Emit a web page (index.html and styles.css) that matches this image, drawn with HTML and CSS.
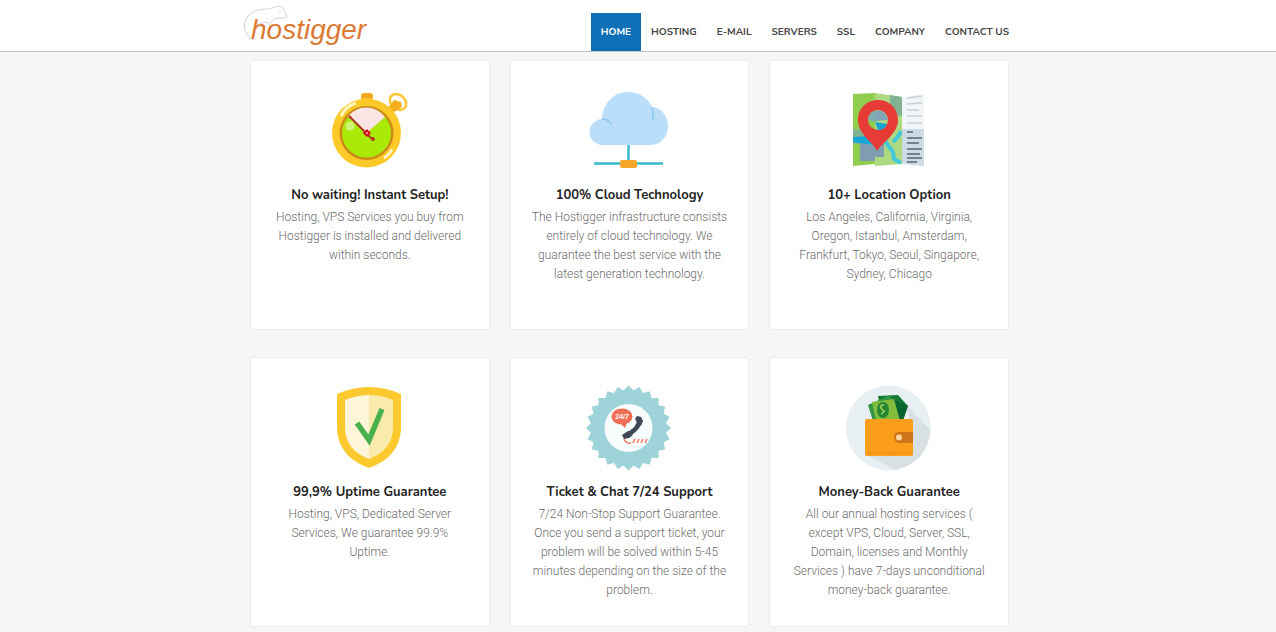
FILE: index.html
```html
<!DOCTYPE html>
<html lang="en">
<head>
<meta charset="utf-8">
<meta name="viewport" content="width=device-width, initial-scale=1">
<title>Hostigger</title>
<link rel="stylesheet" href="styles.css">
</head>
<body>
<header class="site-header">
  <div class="header-inner">
    <a class="logo" href="#">
      <svg class="logo-mark" viewBox="0 0 52 42" aria-hidden="true"><path d="M10 37C3 32 0 26 2 19C4 11 13 6 24 6C29 6 32 2 39 4C42 6 41 10 44 13L43 15L36 15C31 15 29 18 26 22L24 19C19 20 16 20 13 23M36 8l2 1"/></svg>
      <span class="logo-text">hostigger</span>
    </a>
    <nav class="nav">
      <a class="nav-link active" href="#">HOME</a>
      <a class="nav-link" href="#">HOSTING</a>
      <a class="nav-link" href="#">E-MAIL</a>
      <a class="nav-link" href="#">SERVERS</a>
      <a class="nav-link" href="#">SSL</a>
      <a class="nav-link" href="#">COMPANY</a>
      <a class="nav-link" href="#">CONTACT US</a>
    </nav>
  </div>
</header>
<main class="features">
  <article class="card">
    <svg class="icon" viewBox="0 0 100 100" aria-hidden="true">
      <rect x="41" y="13" width="12" height="7" rx="3" fill="#f2a91e"/><path d="M44 18h6v6h-6z" fill="#f9c22e"/>
      <ellipse cx="78" cy="22" rx="9" ry="7" transform="rotate(40 78 22)" fill="#fff" stroke="#fbc52c" stroke-width="2.5"/>
      <path d="M68 28l6-8 7 2 1 5-8 5z" fill="#f5ad20"/>
      <circle cx="46.500" cy="53" r="34.500" fill="#fcc928"/><circle cx="46.500" cy="53" r="27" fill="#ca8b16"/><circle cx="46.500" cy="53" r="24.500" fill="#aaea08"/>
      <path d="M46.500 53L28 37C37 25 54 24 65 37z" fill="#fbe5e5"/>
      <circle cx="30" cy="46" r="4.500" fill="#d0f37a"/>
      <path d="M21 36Q26 26 36 23M64 78Q70 74 72 69" stroke="#fff4c4" stroke-width="3" fill="none"/>
      <path d="M30 37L53 60" stroke="#a83b1e" stroke-width="2"/><circle cx="30" cy="37" r="1.500" fill="#b33b21"/><circle cx="53" cy="59" r="2" fill="#b33b21"/><path d="M47 49l4 4-4 4-4-4z" fill="#d80820"/><circle cx="47" cy="53" r="1" fill="#ffc1b5"/>
    </svg>
    <h2 class="title">No waiting! Instant Setup!</h2>
    <p class="copy">Hosting, VPS Services you buy from Hostigger is installed and delivered within seconds.</p>
  </article>
  <article class="card">
    <svg class="icon" viewBox="0 0 100 100" aria-hidden="true">
      <path d="M24 65A13 13 0 0 1 23 39C24 24 34 12 49 12C60 12 69 18 73 27C82 27 89 36 89 46C89 56 82 65 72 65z" fill="#badefa"/>
      <path d="M23 39Q29 39 32 44M73 27Q75 33 74 40" fill="none" stroke="#8cc9f3" stroke-width="1.500"/>
      <path d="M49.500 65V82M15 83.500H84" fill="none" stroke="#35bccc" stroke-width="2.500"/><rect x="41" y="80" width="17" height="8" rx="2" fill="#f8a52b"/>
    </svg>
    <h2 class="title">100% Cloud Technology</h2>
    <p class="copy">The Hostigger infrastructure consists entirely of cloud technology. We guarantee the best service with the latest generation technology.</p>
  </article>
  <article class="card">
    <svg class="icon" viewBox="0 0 100 100" aria-hidden="true">
      <path d="M14 14L36 13V84L14 86z" fill="#91ce50"/><path d="M36 13L63 17V84L36 86z" fill="#add982"/>
      <path d="M51 15l12 2v19l-12-2zM14 49l22 2v13H14z" fill="#82b294"/><path d="M21 61l15 2v18H21zM36 64h9v13h-9z" fill="#7f9db0"/>
      <path d="M14 57L31 56L36 60L44 56V61L35 65L14 62z" fill="#14a6d7"/><path d="M45 60L54 72L55 79L62 83M54 62Q59 58 62 51" fill="none" stroke="#43c7db" stroke-width="4"/>
      <path d="M63 17L85 14V49H63z" fill="#f1f5f8"/><path d="M63 49H85V86L63 84z" fill="#cddbe5"/>
      <path d="M68 18l15-2M68 24l15-1M68 30h12M68 36h15M68 43h15" stroke="#c7d1d7" stroke-width="1.500"/><path d="M68 52h6M68 58h15M68 63h12M68 69h15M68 74h13M68 78h15M68 82h10" stroke="#56656d" stroke-width="1.500"/>
      <path fill-rule="evenodd" d="M39 20C51 20 59 29 59 40C59 54 43 63 38 71C34 62 19 54 19 40C19 29 27 20 39 20zM39 30A10 10 0 1 0 39 50A10 10 0 1 0 39 30z" fill="#e63c35"/>
      <path d="M36 42l12 2q-2 6-9 6z" fill="#14a6d7"/><path d="M29 40a10 10 0 0 1 7-9v11z" fill="#7bb2ad"/><path d="M36 31q10-3 13 9l-13 1z" fill="#82a5b7"/>
    </svg>
    <h2 class="title">10+ Location Option</h2>
    <p class="copy">Los Angeles, California, Virginia, Oregon, Istanbul, Amsterdam, Frankfurt, Tokyo, Seoul, Singapore, Sydney, Chicago</p>
  </article>
  <article class="card">
    <svg class="icon" viewBox="0 0 100 100" aria-hidden="true">
      <path d="M17 17Q49 3 81 17V50C81 70 69 84 49 91C29 84 17 70 17 50z" fill="#fcca2f"/>
      <path d="M25 23Q37 18 49 18V82C33 76 25 65 25 50z" fill="#fff6da"/><path d="M49 18Q61 18 73 23V50C73 65 65 76 49 82z" fill="#faebad"/>
      <path d="M37 46L49 63L62 32" fill="none" stroke="#4bb04e" stroke-width="5.500"/>
    </svg>
    <h2 class="title">99,9% Uptime Guarantee</h2>
    <p class="copy">Hosting, VPS, Dedicated Server Services, We guarantee 99.9% Uptime.</p>
  </article>
  <article class="card">
    <svg class="icon" viewBox="0 0 100 100" aria-hidden="true">
      <g fill="#9ed3da">
        <path id="tooth" d="M20 21h60v60H20z" transform="translate(-.5 0)"/>
        <use href="#tooth" transform="rotate(15 49.500 51)"/>
        <use href="#tooth" transform="rotate(30 49.500 51)"/>
        <use href="#tooth" transform="rotate(45 49.500 51)"/>
        <use href="#tooth" transform="rotate(60 49.500 51)"/>
        <use href="#tooth" transform="rotate(75 49.500 51)"/>
      </g>
      <circle cx="49.500" cy="51" r="24" fill="#f8fcfc"/>
      <ellipse cx="43" cy="39.500" rx="10.500" ry="8" fill="#f06d56"/><path d="M41 46l5 5 2-6z" fill="#f06d56"/>
      <text class="badge-text" x="43" y="42" text-anchor="middle">24/7</text>
      <path d="M60 43Q61 51 48 58" fill="none" stroke="#3e4856" stroke-width="4.500" stroke-linecap="round"/><path d="M56 42l2-3 4 1 2 4-2 5-3-2zM43 58l6-4 5 4-4 3-5 1z" fill="#3e4856"/>
      <path d="M45 62q2 5 7 4M54 66l2-4M58 66l2-4M62 66l2-4M66 66l2-4" fill="none" stroke="#ef7867" stroke-width="1.500"/>
    </svg>
    <h2 class="title">Ticket &amp; Chat 7/24 Support</h2>
    <p class="copy">7/24 Non-Stop Support Guarantee. Once you send a support ticket, your problem will be solved within 5-45 minutes depending on the size of the problem.</p>
  </article>
  <article class="card">
    <svg class="icon" viewBox="0 0 100 100" aria-hidden="true">
      <circle cx="49.500" cy="51" r="42.500" fill="#e8eff2"/><path d="M69 30L91 53Q89 84 57 93L28 78L74 70z" fill="#d8e0e3"/>
      <path d="M39 19L59 18L69 29L64 44H44z" fill="#147b35"/><path d="M54 22L69 29L63 44H50z" fill="#0a6330"/><path d="M29 28L51 18L59 44H34z" fill="#319543"/><path d="M33 25L55 22L61 44H37z" fill="#81bd3c"/><ellipse cx="44" cy="33" rx="6" ry="8" fill="#268634"/><path d="M45 28q-5 0-3 3t3 3-3 3" fill="none" stroke="#a3d05b" stroke-width="1.500"/>
      <rect x="26" y="42" width="48" height="37" rx="2" fill="#fa9e1b"/><path d="M29 76H72" stroke="#e7890e" stroke-width="1" stroke-dasharray="3 2"/><path d="M60 55h14v11H60q-5-1-5-6t5-5z" fill="#cf7419"/><circle cx="60" cy="60.500" r="3" fill="#ffd7a1"/>
    </svg>
    <h2 class="title">Money-Back Guarantee</h2>
    <p class="copy">All our annual hosting services ( except VPS, Cloud, Server, SSL, Domain, licenses and Monthly Services ) have 7-days unconditional money-back guarantee.</p>
  </article>
</main>
</body>
</html>
```
FILE: styles.css
```css
* { box-sizing: border-box; }

body {
  margin: 0;
  background: #f6f6f6;
  font-family: Roboto, "Liberation Sans", sans-serif;
}

.site-header {
  padding-right: 17px;
  background: #fff;
  border-bottom: 1px solid #c4c4c4;
}

.header-inner {
  display: flex;
  justify-content: space-between;
  align-items: flex-end;
  max-width: 779px;
  margin: 0 auto;
  padding-top: 3px;
}

.logo {
  display: grid;
  margin-left: 3px;
  color: #dc7a35;
  text-decoration: none;
}

.logo-mark {
  grid-area: 1 / 1;
  width: 52px;
  height: 42px;
  fill: none;
  stroke: #cdd3d6;
  stroke-width: 1;
}

.logo-text {
  grid-area: 1 / 1;
  padding: 6px 0 0 8px;
  font: italic 400 28px/42px "Liberation Sans", Arial, sans-serif;
}

.nav { display: flex; }

.nav-link {
  padding: 0 10px;
  color: #444;
  font: 700 10px/38px Nunito, "Open Sans", sans-serif;
  text-decoration: none;
}

.nav-link.active {
  background: #0f70b7;
  color: #fff;
}

.features {
  display: grid;
  grid-template-columns: repeat(auto-fit, minmax(220px, 1fr));
  gap: 27px 20px;
  max-width: 776px;
  margin: 0 auto;
  padding: 8px 17px 5px 0;
}

.card {
  min-height: 270px;
  padding: 19px 20px;
  background: #fff;
  border: 1px solid #ececec;
  border-radius: 2px;
  text-align: center;
}

.icon {
  display: block;
  width: 100px;
  height: 100px;
  margin: 0 auto;
}

.badge-text {
  fill: #fff;
  font: 700 7px "Liberation Sans", sans-serif;
}

.title {
  margin: 5px 0 3px;
  color: #222;
  font: 700 13px/20px Nunito, "Open Sans", sans-serif;
}

.copy {
  margin: 0;
  color: #6c6c6c;
  font-size: 12px;
  font-weight: 300;
  line-height: 19px;
}
```
